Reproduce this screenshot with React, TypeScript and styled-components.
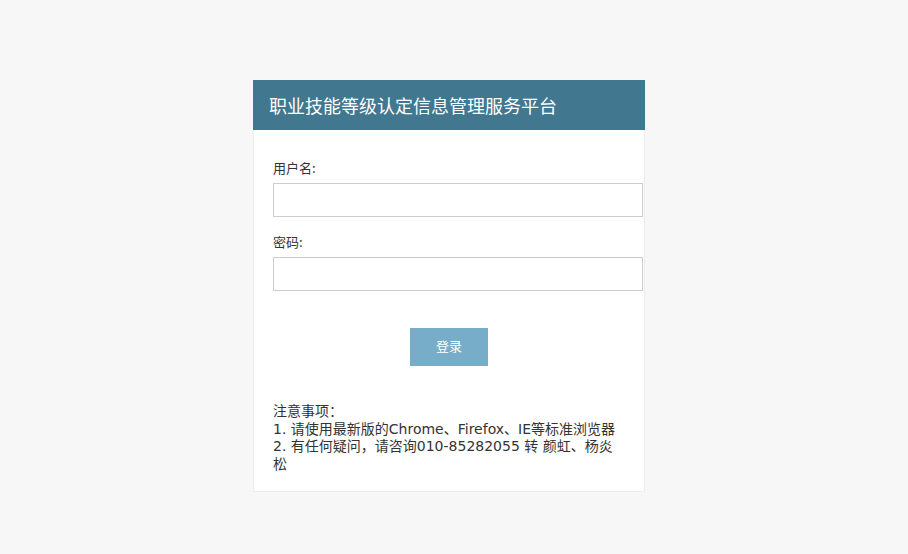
import React from "react";
import styled, { createGlobalStyle } from "styled-components";

const Global = createGlobalStyle`
  html, body { margin: 0; padding: 0; background: #f7f7f7; }
  body { font-family: "DejaVu Sans", "Noto Sans CJK SC", sans-serif; color: #333; }
`;

const Page = styled.div`
  display: flex;
  justify-content: center;
  padding-top: 80px;
  min-height: 554px;
  box-sizing: border-box;
  padding-right: 10px;
`;

const Card = styled.div`
  width: 392px;
  background: #fff;
  border: 1px solid #ececec;
  border-top: none;
  box-sizing: border-box;
  align-self: flex-start;
`;

const Header = styled.div`
  height: 50px;
  background: #41778f;
  color: #fff;
  font-size: 18px;
  line-height: 50px;
  padding-left: 16px;
  margin: 0 -1px;
  font-family: "Noto Sans CJK SC", sans-serif;
`;

const Body = styled.div`
  padding: 28px 0 18px 19px;
  display: flex;
  flex-direction: column;
`;

const Label = styled.label`
  font-size: 13px;
  line-height: 20px;
  height: 20px;
  margin-bottom: 5px;
  font-family: "Noto Sans CJK SC", sans-serif;
  color: #333;
`;

const Input = styled.input`
  width: 370px;
  height: 34px;
  box-sizing: border-box;
  border: 1px solid #ccc;
  background: #fff;
  margin: 0 0 15px 0;
  padding: 0 8px;
  outline: none;
`;

const ButtonRow = styled.div`
  display: flex;
  justify-content: center;
  margin-top: 22px;
  padding-right: 19px;
`;

const Button = styled.button`
  width: 78px;
  height: 38px;
  border: none;
  background: #77adc8;
  color: #fff;
  font-size: 13px;
  font-family: "Noto Sans CJK SC", sans-serif;
  padding: 0 0 4px 0;
  cursor: pointer;
`;

const Notes = styled.div`
  margin-top: 37px;
  width: 352px;
  font-size: 14px;
  line-height: 17.5px;
  color: #333;
`;

export default function App() {
  return (
    <>
      <Global />
      <Page>
        <Card>
          <Header>职业技能等级认定信息管理服务平台</Header>
          <Body>
            <Label>用户名:</Label>
            <Input type="text" />
            <Label>密码:</Label>
            <Input type="password" />
            <ButtonRow>
              <Button>登录</Button>
            </ButtonRow>
            <Notes>
              注意事项：
              <br />
              1. 请使用最新版的Chrome、Firefox、IE等标准浏览器
              <br />
              2. 有任何疑问，请咨询010-85282055 转 颜虹、杨炎松
            </Notes>
          </Body>
        </Card>
      </Page>
    </>
  );
}
